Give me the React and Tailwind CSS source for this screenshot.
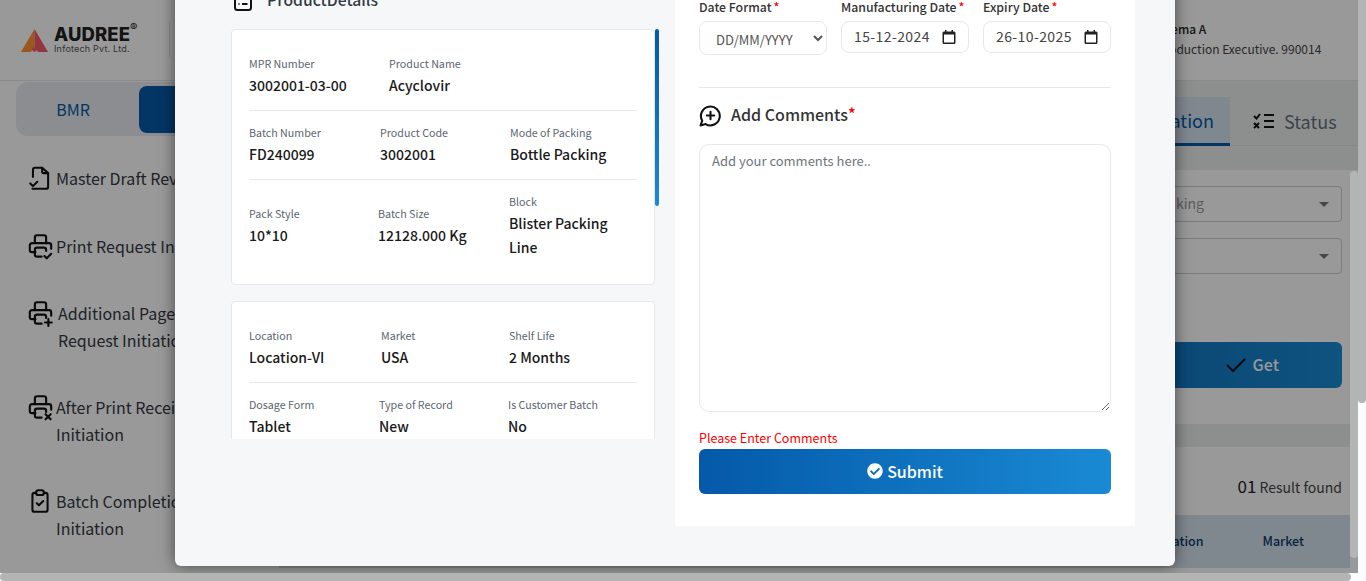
import React from "react";
import { FaCheckCircle } from "react-icons/fa";

const Ico = ({ children, className = "", size = 27, sw = 1.9 }) => (
  <svg width={size} height={size} viewBox="0 0 24 24" fill="none" stroke="#111" strokeWidth={sw} strokeLinecap="round" strokeLinejoin="round" className={"shrink-0 " + className}>
    {children}
  </svg>
);

const PrinterBase = () => (
  <>
    <path d="M7.5 17H4.5a2 2 0 0 1-2-2v-4a2 2 0 0 1 2-2h15a2 2 0 0 1 2 2v3" />
    <path d="M17 9V4a2 2 0 0 0-2-2H9a2 2 0 0 0-2 2v5" />
    <path d="M13 21H9a2 2 0 0 1-2-2v-4a2 2 0 0 1 2-2h6a2 2 0 0 1 2 2v1" />
  </>
);

const Cell = ({ label, value }) => (
  <div className="pt-px pb-px">
    <div className="text-[10.7px] leading-[18px] text-[#5b6470]">{label}</div>
    <div className="text-[14px] leading-[24px] font-medium text-[#1a1a1a]">{value}</div>
  </div>
);

const Divider = () => <div className="h-px bg-[#e6e8ec] my-[12px]" />;

const Req = () => <span className="text-[#f00] ml-[2px]">*</span>;

const Calendar = () => (
  <svg width="14" height="14" viewBox="0 0 14 14" className="shrink-0">
    <path d="M3 0h1.5v1.5h5V0H11v1.5h1A1.5 1.5 0 0 1 13.5 3v9.5A1.5 1.5 0 0 1 12 14H2a1.5 1.5 0 0 1-1.5-1.5V3A1.5 1.5 0 0 1 2 1.5h1zM2 4.5v8h10v-8z" fill="#222" />
  </svg>
);

const DateBox = ({ label, value }) => (
  <div className="w-[128px]">
    <div className="text-[12.3px] leading-[18px] mb-[5px] font-medium text-[#333] whitespace-nowrap">{label}<Req /></div>
    <div className="h-[32px] border border-[#e6e8ec] rounded-[8px] bg-white flex items-center justify-between pl-[12px] pr-[12px] text-[14px] tracking-[0.4px] text-[#444]">
      <span className="-mt-[2px]">{value}</span>
      <Calendar />
    </div>
  </div>
);

const Item = ({ icon, lines, cls, tx = "" }) => (
  <div className={"flex items-start pl-[27px] " + cls}>
    <span className="w-[29px] shrink-0">{icon}</span>
    <div className={"text-[16px] leading-[27px] text-[#333a44] whitespace-nowrap " + tx}>
      {lines.map((l) => <div key={l}>{l}</div>)}
    </div>
  </div>
);

export default function App() {
  return (
    <div className="relative w-[1366px] h-[581px] overflow-hidden bg-white text-[#222]" style={{ fontFamily: '"Noto Sans CJK JP", "Noto Sans", sans-serif' }}>
      <header className="h-[81px] border-b border-[#e3e6ea] flex items-center">
        <div className="w-[170px] h-[36px] flex items-center pl-[21px] border-r border-[#e3e6ea] -mt-[2px]">
          <svg width="27" height="24" viewBox="0 0 27 24" className="mt-[3px]">
            <path d="M13.5 0 0 23h10l3.5-5z" fill="#ff9530" />
            <path d="M13.5 0 27 23H17l-3.5-5z" fill="#f5596a" />
            <circle cx="13.5" cy="20.5" r="2.2" fill="#f5596a" />
          </svg>
          <div className="ml-[6px] relative pt-px" style={{ fontFamily: "Inter, sans-serif" }}>
            <div className="text-[18.5px] leading-[18px] font-extrabold tracking-[0.1px] text-[#222]">AUDREE<span className="absolute -top-[6px] left-[76px] text-[11px] font-normal">®</span></div>
            <div className="text-[9px] leading-[11px] text-[#555] tracking-[0.2px] whitespace-nowrap">Infotech Pvt. Ltd.</div>
          </div>
        </div>
        <div className="ml-auto w-[210px] pl-px -mt-[3px] whitespace-nowrap">
          <div className="text-[12px] leading-[20px] font-medium">Seema A</div>
          <div className="text-[12px] leading-[20px] text-[#444]">Production Executive. 990014</div>
        </div>
      </header>

      <div className="flex h-[492px]">
        <aside className="w-[279px] shrink-0">
          <div className="ml-[16px] mt-px w-[263px] h-[54px] rounded-l-[12px] bg-[#e8ebf0] flex items-center pl-[4px]">
            <div className="w-[106px] text-center text-[16px] text-[#0559a8]">BMR</div>
            <div className="ml-[13px] w-[140px] h-[47px] rounded-l-[8px] bg-[#0559a8]" />
          </div>
          <Item cls="mt-[29px]" lines={["Master Draft Review"]} icon={<Ico size={26}><path d="M14 2.5v4a1 1 0 0 0 1 1h4.5" /><path d="M5.5 11V4.5a2 2 0 0 1 2-2H14l5.5 5V20a2 2 0 0 1-2 2H5" /><path d="M3 17l2.5 2.5 4-4" /></Ico>} />
          <Item cls="mt-[41px]" lines={["Print Request Initiation"]} icon={<Ico><PrinterBase /><path d="M15.5 20.5l2 2 4-4" /></Ico>} />
          <Item cls="mt-[40px]" tx="ml-[2px]" lines={["Additional Page", "Request Initiation"]} icon={<Ico><PrinterBase /><path d="M19 17v6M16 20h6" /></Ico>} />
          <Item cls="mt-[40px]" lines={["After Print Receipt", "Initiation"]} icon={<Ico><PrinterBase /><path d="M16.5 18l4.5 4.5M21 18l-4.5 4.5" /></Ico>} />
          <Item cls="mt-[40px]" lines={["Batch Completion", "Initiation"]} icon={<Ico size={26}><path d="M8.5 4.5H7a2 2 0 0 0-2 2V20a2 2 0 0 0 2 2h10a2 2 0 0 0 2-2V6.5a2 2 0 0 0-2-2h-1.5" /><rect x="8.5" y="2" width="7" height="4.5" rx="2" /><path d="M9 14l2 2 4-4" /></Ico>} />
        </aside>

        <main className="flex-1 min-w-0 pr-[16px]">
          <div className="bg-[#eceeed] -mr-[16px] h-[89px] pt-[16px]">
            <div className="h-[49px] border-b border-[#dfe2e4] flex justify-end pr-[16px]">
              <div className="h-[49px] w-[130px] bg-[#d5e3ee] border-b-[3px] border-[#0559a8] flex items-center justify-end pr-[16px] text-[18px] text-[#0559a8]">Initiation</div>
              <div className="h-[48px] w-[120px] flex items-center pl-[23px] text-[18px] text-[#66707c]">
                <svg width="22" height="18" viewBox="0 0 22 18" fill="none" stroke="#111" strokeWidth="2" className="mr-[9px] shrink-0"><path d="M1 4l2.5 2.5L7 2M1 11l5 5M6 11l-5 5M11 3h10M11 9h10M11 15h10" /></svg>
                Status
              </div>
            </div>
          </div>
          <div className="px-[8px] pt-[16px] flex flex-col items-end">
            <div className="w-[500px] h-[36px] border border-[#ccd0d4] rounded-[4px] flex items-center justify-between pl-[16px] pr-[12px] text-[14px] text-[#999]">
              <span className="pl-[317px] pb-[2px] whitespace-nowrap">king</span>
              <span className="border-x-[5px] border-x-transparent border-t-[5px] border-t-[#777]" />
            </div>
            <div className="w-[500px] h-[36px] mt-[16px] border border-[#ccd0d4] rounded-[4px] flex items-center justify-end pr-[12px]">
              <span className="border-x-[5px] border-x-transparent border-t-[5px] border-t-[#777]" />
            </div>
            <div className="w-[500px] h-[46px] mt-[68px] rounded-[6px] bg-gradient-to-r from-[#0559a8] to-[#1a8ad4] flex items-center justify-end pr-[63px] pb-[2px] text-[16px] font-medium text-white">
              <svg width="20" height="16" viewBox="0 0 20 16" fill="none" stroke="#111" strokeWidth="2" className="mr-[7px] mt-[2px]"><path d="M1 8l6 6L19 2" /></svg>
              Get
            </div>
          </div>
          <div className="h-[23px] mt-[36px] bg-[#eceeed]" />
          <div className="pr-[8px] mt-[27px] text-right text-[14px] leading-[24px] text-[#444]"><span className="text-[17px] text-[#222]">01</span> Result found</div>
          <div className="mt-[16px] h-[53px] bg-[#d5e3ee] flex items-center justify-end pr-[46px] text-[12.5px] font-medium text-[#0b3a6b]">
            <span className="mr-[59px]">Location</span>
            <span>Market</span>
          </div>
        </main>
      </div>

      <div className="absolute left-0 top-0 w-[1358px] h-[573px] bg-black/40 overflow-hidden flex justify-center items-end pr-[8px] pb-[7px]">
        <div className="w-[1000px] shrink-0 bg-[#f6f7f9] rounded-b-[6px] shadow-[0_0_16px_rgba(0,0,0,0.55)] pt-[10px] pb-[40px] flex items-start">
          <div className="w-[500px] shrink-0 pl-[56px] pt-[8px]">
            <div className="flex items-center h-[24px] mb-[17px] text-[15.7px] font-medium text-[#333a44]">
              <svg width="20" height="20" viewBox="0 0 20 20" fill="none" stroke="#111" strokeWidth="2" className="ml-[2px] mr-[14px] mt-[3px]"><rect x="2" y="1" width="16" height="17" rx="2.5" /><path d="M5.5 7h1M9 7h5.5M5.5 12h1M9 12h5.5" /></svg>
              ProductDetails
            </div>
            <div className="relative w-[428px] h-[410px] overflow-hidden">
              <div className="w-[424px] rounded-[4px] border border-[#e6e8ec] bg-white px-[17px] pt-[24px] pb-[24px]">
                <div className="grid grid-cols-[140px_1fr]"><Cell label="MPR Number" value="3002001-03-00" /><Cell label="Product Name" value="Acyclovir" /></div>
                <Divider />
                <div className="grid grid-cols-[131px_130px_1fr]"><Cell label="Batch Number" value="FD240099" /><Cell label="Product Code" value="3002001" /><Cell label="Mode of Packing" value="Bottle Packing" /></div>
                <Divider />
                <div className="grid grid-cols-[129px_131px_110px] items-center"><Cell label="Pack Style" value="10*10" /><Cell label="Batch Size" value="12128.000 Kg" /><Cell label="Block" value={<>Blister Packing<br />Line</>} /></div>
              </div>
              <div className="w-[424px] mt-[16px] rounded-[4px] border border-[#e6e8ec] bg-white px-[17px] pt-[24px] pb-[24px]">
                <div className="grid grid-cols-[132px_128px_1fr]"><Cell label="Location" value="Location-VI" /><Cell label="Market" value="USA" /><Cell label="Shelf Life" value="2 Months" /></div>
                <Divider />
                <div className="grid grid-cols-[130px_129px_1fr]"><Cell label="Dosage Form" value="Tablet" /><Cell label="Type of Record" value="New" /><Cell label="Is Customer Batch" value="No" /></div>
              </div>
              <div className="absolute right-0 top-0 w-[4px] h-[177px] rounded-[2px] bg-gradient-to-b from-[#0559a8] to-[#1a8ad4]" />
            </div>
          </div>

          <div className="w-[460px] shrink-0 bg-white px-[24px] pt-[18px] pb-[32px]">
            <div className="flex justify-between">
              <div className="w-[128px]">
                <div className="text-[12.3px] leading-[18px] mb-[5px] font-medium text-[#333]">Date Format<Req /></div>
                <select className="w-full h-[34px] border border-[#e6e8ec] rounded-[8px] bg-white pl-[12px] pr-[4px] pt-[3px] text-[13px] text-[#555] outline-none" defaultValue="d">
                  <option value="d">DD/MM/YYYY</option>
                </select>
              </div>
              <DateBox label="Manufacturing Date" value="15-12-2024" />
              <DateBox label="Expiry Date" value="26-10-2025" />
            </div>
            <div className="h-px bg-[#e6e8ec] mt-[32px]" />
            <div className="flex items-center h-[26px] mt-[13px] text-[16px] font-medium text-[#333]">
              <svg width="23" height="23" viewBox="0 0 22 22" fill="none" stroke="#111" strokeWidth="2" strokeLinecap="round" strokeLinejoin="round" className="mr-[9px] mt-[2px]"><path d="M1.5 20.5l1.6-4.5a9 9 0 1 1 3.2 3.2z" /><path d="M7.5 11h7M11 7.5v7" /></svg>
              Add Comments<span className="text-[#f00] text-[16px] -mt-[2px]">*</span>
            </div>
            <textarea placeholder="Add your comments here.." className="block w-full h-[268px] mt-[17px] border border-[#e6e8ec] rounded-[10px] px-[12px] py-[5px] text-[13px] leading-[21px] outline-none placeholder:text-[#6c757d]" />
            <div className="text-[12.5px] leading-[20px] mt-[16px] text-[#f00]">Please Enter Comments</div>
            <div className="mt-px h-[45px] pb-[2px] rounded-[6px] bg-gradient-to-r from-[#0559a8] to-[#1a8ad4] flex items-center justify-center text-[16px] font-medium text-white">
              <FaCheckCircle className="text-[16px] mr-[4px]" />Submit
            </div>
          </div>
        </div>
      </div>

      <div className="absolute right-0 top-0 w-[8px] h-[581px] bg-[#fbfcfd]"><div className="w-[8px] h-[403px] rounded-b-[4px] bg-[#b3b5b4]" /></div>
      <div className="absolute left-[1350px] top-[171px] w-[8px] h-[387px] rounded-[4px] bg-[#b3b5b4]" />
      <div className="absolute left-0 bottom-0 w-[1358px] h-[8px] bg-[#fbfcfd]"><div className="w-[1351px] h-[8px] rounded-[4px] bg-[#b3b5b4]" /></div>
    </div>
  );
}
